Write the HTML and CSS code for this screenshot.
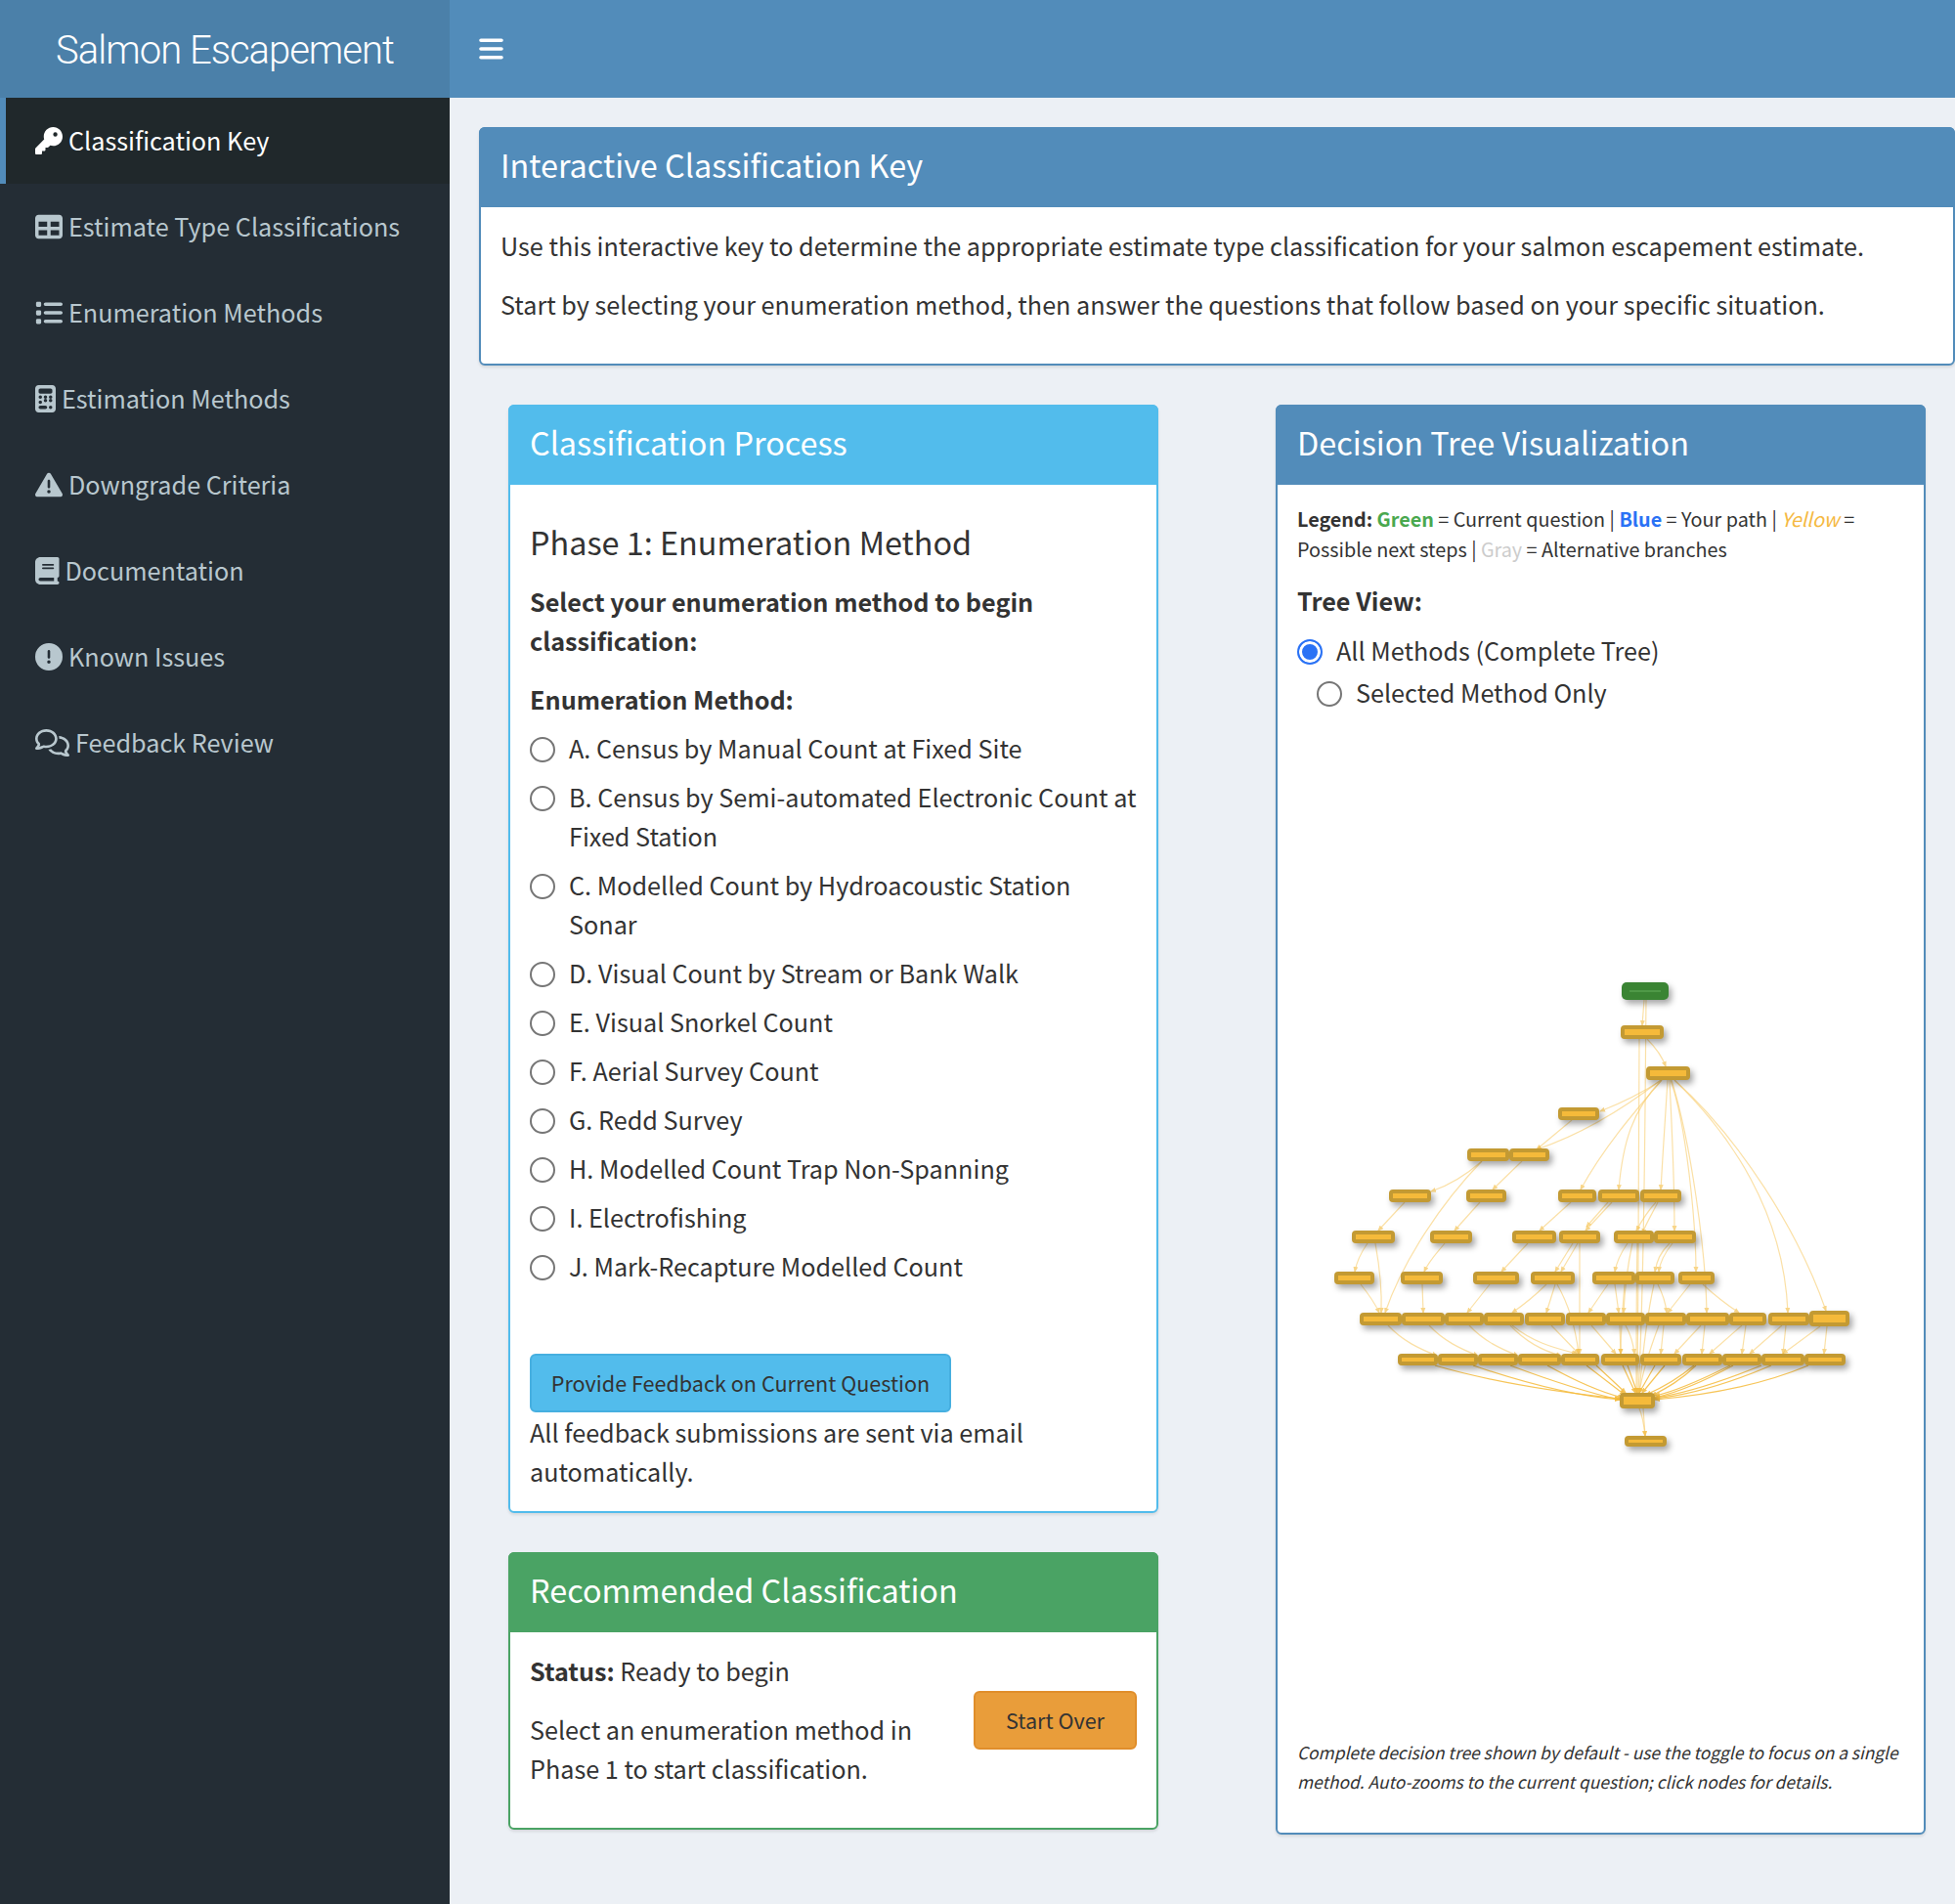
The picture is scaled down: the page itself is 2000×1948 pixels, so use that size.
FILE: index.html
```html
<!DOCTYPE html>
<html lang="en">
  <head>
    <meta charset="UTF-8" />
    <title>Salmon Escapement</title>
    <link rel="stylesheet" href="styles.css">
  </head>
  <body>
    <div class="wrapper">
      <aside class="sidebar">
        <div class="logo">Salmon Escapement</div>
        <ul class="menu">
          <li class="active">
            <svg class="icon" viewBox="0 0 512 512"><path d="M336 352c97.2 0 176-78.8 176-176S433.2 0 336 0S160 78.8 160 176c0 18.7 2.9 36.8 8.3 53.7L7 391c-4.5 4.5-7 10.6-7 17v80c0 13.3 10.7 24 24 24h80c13.3 0 24-10.7 24-24V448h40c13.3 0 24-10.7 24-24V384h40c6.4 0 12.5-2.5 17-7l33.3-33.3c16.9 5.4 35 8.3 53.7 8.3zM376 96a40 40 0 1 1 0 80 40 40 0 1 1 0-80z"/></svg>
            <span>Classification Key</span>
          </li>
          <li>
            <svg class="icon" viewBox="0 0 512 512"><path d="M64 256V160H224v96H64zm0 64H224v96H64V320zm224 96V320H448v96H288zM448 256H288V160H448v96zM64 32C28.7 32 0 60.7 0 96V416c0 35.3 28.7 64 64 64H448c35.3 0 64-28.7 64-64V96c0-35.3-28.7-64-64-64H64z"/></svg>
            <span>Estimate Type Classifications</span>
          </li>
          <li>
            <svg class="icon" viewBox="0 0 512 512"><path d="M40 48C26.7 48 16 58.7 16 72v48c0 13.3 10.7 24 24 24H88c13.3 0 24-10.7 24-24V72c0-13.3-10.7-24-24-24H40zM192 64c-17.7 0-32 14.3-32 32s14.3 32 32 32H480c17.7 0 32-14.3 32-32s-14.3-32-32-32H192zm0 160c-17.7 0-32 14.3-32 32s14.3 32 32 32H480c17.7 0 32-14.3 32-32s-14.3-32-32-32H192zm0 160c-17.7 0-32 14.3-32 32s14.3 32 32 32H480c17.7 0 32-14.3 32-32s-14.3-32-32-32H192zM16 232v48c0 13.3 10.7 24 24 24H88c13.3 0 24-10.7 24-24V232c0-13.3-10.7-24-24-24H40c-13.3 0-24 10.7-24 24zM40 368c-13.3 0-24 10.7-24 24v48c0 13.3 10.7 24 24 24H88c13.3 0 24-10.7 24-24V392c0-13.3-10.7-24-24-24H40z"/></svg>
            <span>Enumeration Methods</span>
          </li>
          <li>
            <svg class="icon icon-narrow" viewBox="0 0 384 512"><path d="M64 0C28.7 0 0 28.7 0 64V448c0 35.3 28.7 64 64 64H320c35.3 0 64-28.7 64-64V64c0-35.3-28.7-64-64-64H64zM96 64H288c17.7 0 32 14.3 32 32v32c0 17.7-14.3 32-32 32H96c-17.7 0-32-14.3-32-32V96c0-17.7 14.3-32 32-32zm32 160a32 32 0 1 1 -64 0 32 32 0 1 1 64 0zM96 352a32 32 0 1 1 0-64 32 32 0 1 1 0 64zM64 416c0-17.7 14.3-32 32-32h96c17.7 0 32 14.3 32 32s-14.3 32-32 32H96c-17.7 0-32-14.3-32-32zM192 256a32 32 0 1 1 0-64 32 32 0 1 1 0 64zm32 32a32 32 0 1 1 -64 0 32 32 0 1 1 64 0zm64-32a32 32 0 1 1 0-64 32 32 0 1 1 0 64zm32 32a32 32 0 1 1 -64 0 32 32 0 1 1 64 0zM288 448a32 32 0 1 1 0-64 32 32 0 1 1 0 64z"/></svg>
            <span>Estimation Methods</span>
          </li>
          <li>
            <svg class="icon" viewBox="0 0 512 512"><path d="M256 32c14.2 0 27.3 7.5 34.5 19.8l216 368c7.3 12.4 7.3 27.7 .2 40.1S486.3 480 472 480H40c-14.3 0-27.6-7.7-34.7-20.1s-7-27.8 .2-40.1l216-368C228.7 39.5 241.8 32 256 32zm0 128c-13.3 0-24 10.7-24 24V296c0 13.3 10.7 24 24 24s24-10.7 24-24V184c0-13.3-10.7-24-24-24zm32 224a32 32 0 1 0 -64 0 32 32 0 1 0 64 0z"/></svg>
            <span>Downgrade Criteria</span>
          </li>
          <li>
            <svg class="icon icon-book" viewBox="0 0 448 512"><path d="M96 0C43 0 0 43 0 96V416c0 53 43 96 96 96H384h32c17.7 0 32-14.3 32-32s-14.3-32-32-32V384c17.7 0 32-14.3 32-32V32c0-17.7-14.3-32-32-32H384 96zm0 384H352v64H96c-17.7 0-32-14.3-32-32s14.3-32 32-32zm32-240c0-8.8 7.2-16 16-16H336c8.8 0 16 7.2 16 16s-7.2 16-16 16H144c-8.8 0-16-7.2-16-16zm16 48H336c8.8 0 16 7.2 16 16s-7.2 16-16 16H144c-8.8 0-16-7.2-16-16s7.2-16 16-16z"/></svg>
            <span>Documentation</span>
          </li>
          <li>
            <svg class="icon" viewBox="0 0 512 512"><path d="M256 512A256 256 0 1 0 256 0a256 256 0 1 0 0 512zm0-384c13.3 0 24 10.7 24 24V264c0 13.3-10.7 24-24 24s-24-10.7-24-24V152c0-13.3 10.7-24 24-24zM224 352a32 32 0 1 1 64 0 32 32 0 1 1 -64 0z"/></svg>
            <span>Known Issues</span>
          </li>
          <li>
            <svg class="icon icon-wide" viewBox="0 0 640 512"><path d="M88.2 309.1c9.8-18.3 6.8-40.8-7.5-55.8C59.4 230.9 48 204 48 176c0-63.5 63.8-128 160-128s160 64.5 160 128s-63.8 128-160 128c-13.1 0-25.8-1.3-37.8-3.6c-10.4-2-21.2-.6-30.7 4.2c-4.1 2.1-8.3 4.1-12.6 6c-16 7.2-32.9 13.5-49.9 18c2.8-4.6 5.4-9.1 7.9-13.6c1.1-1.9 2.2-3.9 3.2-5.9zM0 176c0 41.8 17.2 80.1 45.9 110.3c-.9 1.7-1.9 3.5-2.8 5.1c-10.3 18.4-22.3 36.5-36.6 52.1c-6.6 7-8.3 17.2-4.6 25.9C5.8 378.3 14.4 384 24 384c43 0 86.5-13.3 122.7-29.7c4.8-2.2 9.6-4.5 14.2-6.8c15.1 3 30.9 4.5 47.1 4.5c114.9 0 208-78.8 208-176S322.9 0 208 0S0 78.8 0 176zM432 480c16.2 0 31.9-1.6 47.1-4.5c4.6 2.3 9.4 4.6 14.2 6.8C529.5 498.7 573 512 616 512c9.6 0 18.2-5.7 22-14.5c3.8-8.8 2-19-4.6-25.9c-14.2-15.6-26.2-33.7-36.6-52.1c-.9-1.7-1.9-3.4-2.8-5.1C622.8 384.1 640 345.8 640 304c0-94.4-87.9-171.5-198.2-175.8c4.1 15.2 6.2 31.2 6.2 47.8l0 .6c87.2 6.7 144 67.5 144 127.4c0 28-11.4 54.9-32.7 77.2c-14.3 15-17.3 37.6-7.5 55.8c1.1 2 2.2 4 3.2 5.9c2.5 4.5 5.2 9 7.9 13.6c-17-4.5-33.9-10.7-49.9-18c-4.3-1.9-8.5-3.9-12.6-6c-9.5-4.8-20.3-6.2-30.7-4.2c-12.1 2.4-24.7 3.6-37.8 3.6c-61.7 0-110-26.5-136.8-62.3c-16 5.4-32.8 9.4-50 11.8C279 439.8 350 480 432 480z"/></svg>
            <span>Feedback Review</span>
          </li>
        </ul>
      </aside>

      <div class="main">
        <header class="navbar">
          <svg class="toggle" viewBox="0 0 448 512"><path d="M0 96C0 78.3 14.3 64 32 64H416c17.7 0 32 14.3 32 32s-14.3 32-32 32H32C14.3 128 0 113.7 0 96zM0 256c0-17.7 14.3-32 32-32H416c17.7 0 32 14.3 32 32s-14.3 32-32 32H32c-17.7 0-32-14.3-32-32zM448 416c0 17.7-14.3 32-32 32H32c-17.7 0-32-14.3-32-32s14.3-32 32-32H416c17.7 0 32 14.3 32 32z"/></svg>
        </header>

        <section class="content">
          <div class="box box-primary">
            <h3 class="box-title">Interactive Classification Key</h3>
            <div class="box-body">
              <p>Use this interactive key to determine the appropriate estimate type classification for your salmon escapement estimate.</p>
              <p>Start by selecting your enumeration method, then answer the questions that follow based on your specific situation.</p>
            </div>
          </div>

          <div class="columns">
            <div class="column">
              <div class="box box-info">
                <h3 class="box-title">Classification Process</h3>
                <div class="box-body">
                  <h3 class="phase">Phase 1: Enumeration Method</h3>
                  <p class="lead">Select your enumeration method to begin classification:</p>
                  <div class="field-label">Enumeration Method:</div>
                  <label class="radio"><input type="radio" name="method" /><span>A. Census by Manual Count at Fixed Site</span></label>
                  <label class="radio"><input type="radio" name="method" /><span>B. Census by Semi-automated Electronic Count at Fixed Station</span></label>
                  <label class="radio"><input type="radio" name="method" /><span>C. Modelled Count by Hydroacoustic Station Sonar</span></label>
                  <label class="radio"><input type="radio" name="method" /><span>D. Visual Count by Stream or Bank Walk</span></label>
                  <label class="radio"><input type="radio" name="method" /><span>E. Visual Snorkel Count</span></label>
                  <label class="radio"><input type="radio" name="method" /><span>F. Aerial Survey Count</span></label>
                  <label class="radio"><input type="radio" name="method" /><span>G. Redd Survey</span></label>
                  <label class="radio"><input type="radio" name="method" /><span>H. Modelled Count Trap Non-Spanning</span></label>
                  <label class="radio"><input type="radio" name="method" /><span>I. Electrofishing</span></label>
                  <label class="radio"><input type="radio" name="method" /><span>J. Mark-Recapture Modelled Count</span></label>
                  <button class="btn btn-info">Provide Feedback on Current Question</button>
                  <div>All feedback submissions are sent via email automatically.</div>
                </div>
              </div>

              <div class="box box-success">
                <h3 class="box-title">Recommended Classification</h3>
                <div class="box-body rec-body">
                  <div class="rec-text">
                    <p><strong>Status:</strong> Ready to begin</p>
                    <p>Select an enumeration method in Phase 1 to start classification.</p>
                  </div>
                  <button class="btn btn-warning">Start Over</button>
                </div>
              </div>
            </div>

            <div class="column">
              <div class="box box-primary">
                <h3 class="box-title">Decision Tree Visualization</h3>
                <div class="box-body">
                  <div class="legend">
                    <strong>Legend:</strong> <strong class="green">Green</strong> = Current question | <strong class="blue">Blue</strong> = Your path | <em class="yellow">Yellow</em> = Possible next steps | <span class="gray">Gray</span> = Alternative branches
                  </div>
                  <div class="field-label tree-label">Tree View:</div>
                  <label class="tree-radio"><input type="radio" name="view" checked /><span>All Methods (Complete Tree)</span></label>
                  <label class="tree-radio tree-radio-inline"><input type="radio" name="view" /><span>Selected Method Only</span></label>

                  <svg class="tree" viewBox="1327 740 621 1030">
                    <defs>
                      <marker id="arrow" markerWidth="6" markerHeight="6" refX="5" refY="3" orient="auto" markerUnits="userSpaceOnUse"><path d="M0 0.5L6 3L0 5.5z" fill="#f5bb3c"/></marker>
                    </defs>
                    <g class="edges" marker-end="url(#arrow)">
                      <path d="M1682 1023L1680 1049"/>
                      <path d="M1684 1023C1683 1100 1683 1300 1676 1425"/>
                      <path d="M1677 1063C1677 1150 1676 1300 1675 1425"/>
                      <path d="M1685 1063C1694 1072 1700 1080 1704 1091"/>
                      <path d="M1700 1105C1680 1118 1660 1128 1637 1137"/>
                      <path d="M1699 1105C1660 1135 1620 1160 1572 1176"/>
                      <path d="M1608 1146L1572 1176"/>
                      <path d="M1700 1105C1670 1140 1640 1175 1617 1217"/>
                      <path d="M1700 1105C1670 1135 1660 1170 1656 1217"/>
                      <path d="M1706 1105C1704 1140 1701 1180 1699 1217"/>
                      <path d="M1708 1105C1710 1150 1713 1200 1713 1259"/>
                      <path d="M1709 1105C1725 1150 1735 1250 1735 1301"/>
                      <path d="M1710 1105C1730 1170 1745 1280 1746 1343"/>
                      <path d="M1713 1105C1770 1160 1825 1240 1829 1343"/>
                      <path d="M1713 1105C1780 1165 1840 1260 1868 1341"/>
                      <path d="M1516 1188C1500 1202 1485 1212 1464 1219"/>
                      <path d="M1516 1188C1475 1230 1435 1290 1417 1343"/>
                      <path d="M1557 1188L1527 1217"/>
                      <path d="M1437 1230L1410 1259"/>
                      <path d="M1514 1230L1488 1259"/>
                      <path d="M1607 1230L1575 1259"/>
                      <path d="M1649 1230L1622 1259"/>
                      <path d="M1645 1230L1623 1255"/>
                      <path d="M1694 1230C1685 1240 1680 1248 1674 1259"/>
                      <path d="M1696 1230C1690 1242 1685 1250 1680 1262"/>
                      <path d="M1399 1272C1392 1282 1388 1290 1386 1301"/>
                      <path d="M1407 1272C1412 1300 1414 1320 1413 1343"/>
                      <path d="M1478 1272C1470 1282 1462 1290 1457 1301"/>
                      <path d="M1563 1272L1536 1301"/>
                      <path d="M1609 1272L1591 1301"/>
                      <path d="M1614 1272L1597 1301"/>
                      <path d="M1616 1272L1616 1385"/>
                      <path d="M1665 1272C1658 1282 1654 1290 1652 1301"/>
                      <path d="M1670 1272C1665 1295 1662 1320 1661 1343"/>
                      <path d="M1675 1272C1674 1320 1674 1380 1674 1425"/>
                      <path d="M1708 1272C1698 1282 1695 1290 1693 1301"/>
                      <path d="M1711 1272C1703 1282 1698 1292 1697 1301"/>
                      <path d="M1392 1314C1400 1324 1406 1332 1411 1343"/>
                      <path d="M1455 1314L1456 1343"/>
                      <path d="M1524 1314L1501 1343"/>
                      <path d="M1582 1314C1570 1326 1560 1334 1547 1343"/>
                      <path d="M1591 1314L1582 1343"/>
                      <path d="M1593 1314C1605 1335 1612 1360 1615 1385"/>
                      <path d="M1645 1314L1625 1343"/>
                      <path d="M1652 1314L1656 1343"/>
                      <path d="M1662 1314C1660 1340 1658 1360 1658 1385"/>
                      <path d="M1696 1314C1701 1324 1704 1332 1705 1343"/>
                      <path d="M1692 1314C1684 1350 1680 1390 1677 1425"/>
                      <path d="M1729 1314L1706 1343"/>
                      <path d="M1742 1314C1755 1326 1765 1334 1779 1343"/>
                      <path d="M1420 1356C1435 1372 1452 1380 1470 1387"/>
                      <path d="M1462 1356C1477 1372 1494 1380 1512 1387"/>
                      <path d="M1503 1356C1518 1372 1535 1380 1553 1387"/>
                      <path d="M1545 1356C1560 1372 1578 1382 1597 1387"/>
                      <path d="M1547 1356C1570 1375 1595 1380 1613 1385"/>
                      <path d="M1587 1356L1615 1385"/>
                      <path d="M1628 1356L1653 1385"/>
                      <path d="M1657 1356L1658 1385"/>
                      <path d="M1663 1356C1668 1365 1671 1375 1672 1385"/>
                      <path d="M1702 1356L1699 1385"/>
                      <path d="M1697 1356C1688 1380 1680 1405 1677 1425"/>
                      <path d="M1740 1356L1713 1385"/>
                      <path d="M1744 1356L1741 1385"/>
                      <path d="M1782 1356L1749 1385"/>
                      <path d="M1786 1356L1782 1385"/>
                      <path d="M1823 1356L1790 1385"/>
                      <path d="M1827 1356L1824 1385"/>
                      <path d="M1862 1357L1824 1385"/>
                      <path d="M1869 1357L1866 1385"/>
                      <path class="edge-strong" d="M1468 1397C1530 1415 1600 1425 1657 1431"/>
                      <path class="edge-strong" d="M1507 1397C1560 1415 1610 1428 1657 1432"/>
                      <path class="edge-strong" d="M1545 1397C1585 1412 1625 1425 1657 1432"/>
                      <path class="edge-strong" d="M1583 1397C1610 1412 1640 1425 1660 1430"/>
                      <path class="edge-strong" d="M1623 1397L1662 1427"/>
                      <path class="edge-strong" d="M1633 1397L1663 1425"/>
                      <path class="edge-strong" d="M1660 1397L1673 1425"/>
                      <path class="edge-strong" d="M1665 1397L1675 1425"/>
                      <path class="edge-strong" d="M1693 1397L1677 1425"/>
                      <path class="edge-strong" d="M1703 1397L1680 1425"/>
                      <path class="edge-strong" d="M1733 1397C1715 1412 1700 1420 1684 1427"/>
                      <path class="edge-strong" d="M1735 1397C1720 1412 1705 1420 1690 1428"/>
                      <path class="edge-strong" d="M1773 1397C1740 1415 1710 1426 1693 1430"/>
                      <path class="edge-strong" d="M1770 1397C1740 1412 1712 1424 1693 1428"/>
                      <path class="edge-strong" d="M1812 1397C1770 1415 1730 1427 1693 1431"/>
                      <path class="edge-strong" d="M1802 1397C1765 1412 1728 1425 1693 1430"/>
                      <path class="edge-strong" d="M1850 1397C1800 1418 1740 1428 1693 1432"/>
                      <path d="M1677 1441C1681 1450 1682 1460 1683 1469"/>
                      <path d="M1681 1441L1683 1469"/>
                    </g>
                    <g class="nodes">
                      <rect class="node-current" x="1659" y="1005" width="48" height="18"/>
                      <line class="node-current-label" x1="1667" y1="1014" x2="1699" y2="1014"/>
                      <rect x="1660" y="1051" width="40" height="10"/>
                      <rect x="1686" y="1093" width="41" height="10"/>
                      <rect x="1596" y="1135" width="38" height="9"/>
                      <rect x="1503" y="1177" width="39" height="9"/>
                      <rect x="1546" y="1177" width="37" height="9"/>
                      <rect x="1423" y="1219" width="39" height="9"/>
                      <rect x="1502" y="1219" width="37" height="9"/>
                      <rect x="1596" y="1219" width="35" height="9"/>
                      <rect x="1637" y="1219" width="38" height="9"/>
                      <rect x="1680" y="1219" width="38" height="9"/>
                      <rect x="1385" y="1261" width="40" height="9"/>
                      <rect x="1465" y="1261" width="39" height="9"/>
                      <rect x="1549" y="1261" width="41" height="9"/>
                      <rect x="1597" y="1261" width="38" height="9"/>
                      <rect x="1653" y="1261" width="37" height="9"/>
                      <rect x="1694" y="1261" width="39" height="9"/>
                      <rect x="1367" y="1303" width="37" height="9"/>
                      <rect x="1435" y="1303" width="39" height="9"/>
                      <rect x="1509" y="1303" width="43" height="9"/>
                      <rect x="1568" y="1303" width="41" height="9"/>
                      <rect x="1631" y="1303" width="40" height="9"/>
                      <rect x="1675" y="1303" width="36" height="9"/>
                      <rect x="1719" y="1303" width="33" height="9"/>
                      <rect x="1393" y="1345" width="39" height="9"/>
                      <rect x="1436" y="1345" width="40" height="9"/>
                      <rect x="1480" y="1345" width="36" height="9"/>
                      <rect x="1520" y="1345" width="37" height="9"/>
                      <rect x="1562" y="1345" width="37" height="9"/>
                      <rect x="1604" y="1345" width="37" height="9"/>
                      <rect x="1645" y="1345" width="36" height="9"/>
                      <rect x="1685" y="1345" width="38" height="9"/>
                      <rect x="1727" y="1345" width="40" height="9"/>
                      <rect x="1771" y="1345" width="34" height="9"/>
                      <rect x="1811" y="1345" width="38" height="9"/>
                      <rect x="1853" y="1343" width="37" height="12"/>
                      <rect x="1432" y="1387" width="37" height="8"/>
                      <rect x="1473" y="1387" width="37" height="8"/>
                      <rect x="1514" y="1387" width="37" height="8"/>
                      <rect x="1555" y="1387" width="40" height="8"/>
                      <rect x="1599" y="1387" width="35" height="8"/>
                      <rect x="1640" y="1387" width="35" height="8"/>
                      <rect x="1680" y="1387" width="38" height="8"/>
                      <rect x="1723" y="1387" width="37" height="8"/>
                      <rect x="1764" y="1387" width="36" height="8"/>
                      <rect x="1804" y="1387" width="40" height="8"/>
                      <rect x="1848" y="1387" width="38" height="8"/>
                      <rect x="1659" y="1427" width="32" height="12"/>
                      <rect x="1664" y="1471" width="39" height="7"/>
                    </g>
                  </svg>

                  <div class="tree-note">Complete decision tree shown by default - use the toggle to focus on a single method. Auto-zooms to the current question; click nodes for details.</div>
                </div>
              </div>
            </div>
          </div>
        </section>
      </div>
    </div>
  </body>
</html>
```

FILE: styles.css
```css
* {
  box-sizing: border-box;
}

body {
  margin: 0;
  color: #333;
  background-color: #ecf0f5;
  font-family: "Noto Sans CJK SC", "Noto Sans", sans-serif;
  font-size: 25.2px;
  line-height: 40px;
}

p {
  margin: 0 0 20px;
}

.wrapper {
  display: flex;
  min-height: 1948px;
}

/* sidebar */
.sidebar {
  flex: 0 0 460px;
  background-color: #242d35;
}

.logo {
  height: 100px;
  padding-top: 3px;
  background-color: #4b80a9;
  color: #fff;
  font-family: Roboto, "Liberation Sans", sans-serif;
  font-size: 40px;
  font-weight: 300;
  letter-spacing: -1px;
  line-height: 97px;
  text-align: center;
}

.menu {
  list-style: none;
  margin: 0;
  padding: 0;
}

.menu li {
  display: flex;
  align-items: center;
  gap: 6px;
  height: 88px;
  padding-left: 36px;
  color: #b8c7ce;
}

.menu li span {
  padding-bottom: 2px;
}

.menu li.active {
  padding-left: 30px;
  border-left: 6px solid #528cba;
  background-color: #20282b;
  color: #fff;
}

.icon {
  flex: none;
  width: 28px;
  height: 28px;
  fill: currentColor;
}

.icon-narrow {
  width: 21px;
}

.icon-book {
  width: 24.5px;
}

.icon-wide {
  width: 35px;
}

/* top bar */
.main {
  flex: 1;
  min-width: 0;
}

.navbar {
  display: flex;
  align-items: center;
  height: 100px;
  padding-left: 30px;
  background-color: #528cba;
}

.toggle {
  width: 25px;
  height: 28px;
  fill: #fff;
}

/* content */
.content {
  padding: 30px 0 0 30px;
}

.box {
  margin-bottom: 40px;
  background-color: #fff;
  border: 2px solid;
  border-radius: 6px;
  box-shadow: 0 2px 3px rgba(0, 0, 0, 0.1);
}

.box-primary {
  border-color: #528cba;
}

.box-info {
  border-color: #52bcec;
}

.box-success {
  border-color: #4aa364;
}

.box-title {
  margin: -2px -2px 0;
  height: 82px;
  padding: 0 22px;
  border-radius: 6px 6px 0 0;
  color: #fff;
  font-size: 32.4px;
  font-weight: 400;
  line-height: 76px;
}

.box-primary .box-title {
  background-color: #528cba;
}

.box-info .box-title {
  background-color: #52bcec;
}

.box-success .box-title {
  background-color: #4aa364;
}

.box-body {
  padding: 19px 20px 21px;
}

.columns {
  display: flex;
  gap: 120px;
  padding: 0 30px;
}

.column {
  flex: 0 0 665px;
}

.phase {
  margin: 17px 0 19px;
  font-size: 32.4px;
  font-weight: 400;
  line-height: 44px;
}

.lead {
  font-weight: 700;
}

.field-label {
  margin-bottom: 10px;
  font-weight: 700;
}

.radio {
  display: flex;
  gap: 14px;
  margin: 0 -3px 10px 0;
}

.radio input,
.tree-radio input {
  flex: none;
  appearance: none;
  width: 26px;
  height: 26px;
  margin: 9px 0 0;
  background-color: #fff;
  border: 2px solid #767676;
  border-radius: 50%;
}

.tree-radio input:checked {
  border-color: #2a72f5;
  background-color: #2a72f5;
  box-shadow: inset 0 0 0 3px #fff;
}

.btn {
  height: 60px;
  padding-bottom: 3px;
  border: 2px solid;
  border-radius: 6px;
  color: #333;
  font-family: inherit;
  font-size: 21.6px;
}

.btn-info {
  display: block;
  width: 431px;
  margin-top: 70px;
  background-color: #52bcec;
  border-color: #46afe0;
}

.btn-warning {
  flex: none;
  width: 167px;
  margin-top: 41px;
  background-color: #e99d3a;
  border-color: #e08e2b;
}

.rec-body {
  display: flex;
  align-items: flex-start;
  justify-content: space-between;
}

.rec-text {
  width: 420px;
}

.legend {
  font-size: 19.8px;
  line-height: 31px;
}

.green {
  color: #4aa84f;
}

.blue {
  color: #2a72f5;
}

.yellow {
  color: #f5b942;
}

.gray {
  color: #ccc;
}

.tree-label {
  margin: 17px 0 11px;
}

.tree-radio {
  display: flex;
  gap: 14px;
  margin-bottom: 3px;
}

.tree-radio-inline {
  margin-left: 20px;
}

.tree {
  display: block;
  width: 621px;
  height: 1030px;
  margin-top: 12px;
}

.edges path {
  fill: none;
  stroke: #f8cc6c;
  stroke-width: 1.2;
  opacity: 0.6;
}

.edges .edge-strong {
  stroke: #f5bb3c;
  opacity: 0.85;
}

.nodes {
  filter: drop-shadow(3px 4px 3px rgba(0, 0, 0, 0.35));
}

.nodes rect {
  fill: #f5ba3a;
  stroke: #c39a33;
  stroke-width: 4;
  rx: 2px;
}

.nodes .node-current {
  fill: #3a8433;
  stroke: none;
  rx: 5px;
}

.node-current-label {
  stroke: #57a04f;
  stroke-width: 1.5;
}

.tree-note {
  margin-top: 8px;
  padding-bottom: 17px;
  font-size: 17.35px;
  font-style: italic;
  line-height: 29.5px;
}
```
